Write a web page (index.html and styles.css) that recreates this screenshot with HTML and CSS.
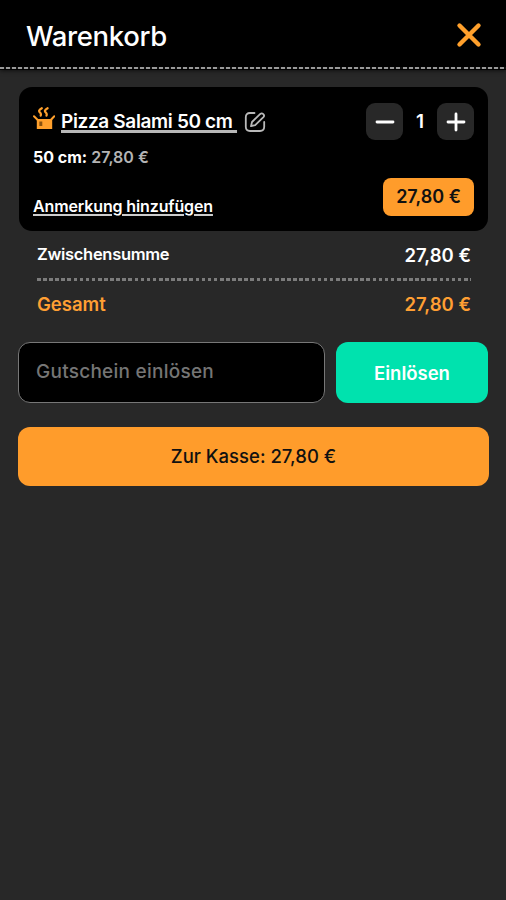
FILE: index.html
```html
<!DOCTYPE html>
<html lang="de">
<head>
<meta charset="utf-8">
<title>Warenkorb</title>
<link rel="stylesheet" href="styles.css">
</head>
<body>
<header class="header">
  <h1 class="title">Warenkorb</h1>
  <button class="close" aria-label="Schließen"><svg width="26" height="26" viewBox="0 0 26 26"><path d="M3.500 3.500 22.500 22.500M22.500 3.500 3.500 22.500" fill="none" stroke="#ffa02c" stroke-width="4.400" stroke-linecap="round"/></svg></button>
</header>
<main class="cart">
  <section class="item">
    <div class="item-head">
      <svg class="dish" width="22" height="23" viewBox="0 0 22 23">
        <path d="M3.800 12h15.400v10H3.800z" fill="#ffa02c"/>
        <path d="M1 9.300 5 13.300M21.300 9.300 17.500 13.300" fill="none" stroke="#ffa02c" stroke-width="2" stroke-linecap="round"/>
        <path d="M8.800 1.200C5.600 3 5.600 4.200 7 5.500 8 6.500 8.100 7.700 7.700 8.700M14.600 1.200C11.400 3 11.400 4.200 12.800 5.500 13.800 6.500 13.900 7.700 13.500 8.700" fill="none" stroke="#ffa02c" stroke-width="2.200" stroke-linecap="round"/>
        <path d="M6.300 14.500h3v4.500h-3z" fill="#8a520f"/>
      </svg>
      <a class="item-name">Pizza Salami 50 cm&nbsp;</a>
      <svg class="edit" width="22" height="22" viewBox="0 0 22 22" fill="none" stroke="#b9b9b9" stroke-width="1.800" stroke-linecap="round" stroke-linejoin="round">
        <path d="M10.500 2H6Q1.800 2 1.800 6.200v9.600Q1.800 20 6 20h10Q20.200 20 20.200 15.800V11"/>
        <path d="M7 15.200 8 11 16.300 2.900Q17.800 1.800 19.300 3.200T19.400 6.200L11.200 14.200Z"/>
      </svg>
      <div class="stepper">
        <button class="step" aria-label="Weniger"><svg width="20" height="20" viewBox="0 0 20 20"><path d="M2 10h16" stroke="#fff" stroke-width="2.800" stroke-linecap="round"/></svg></button>
        <span class="count">1</span>
        <button class="step" aria-label="Mehr"><svg width="20" height="20" viewBox="0 0 20 20"><path d="M2 10h16M10 2v16" stroke="#fff" stroke-width="2.800" stroke-linecap="round"/></svg></button>
      </div>
    </div>
    <p class="variant"><b>50 cm:</b> 27,80 €</p>
    <div class="item-foot">
      <a class="note">Anmerkung hinzufügen</a>
      <span class="price">27,80 €</span>
    </div>
  </section>
  <section class="totals">
    <div class="row subtotal"><span class="label">Zwischensumme</span><span>27,80 €</span></div>
    <div class="divider"></div>
    <div class="row total"><span>Gesamt</span><span>27,80 €</span></div>
  </section>
  <div class="voucher">
    <input class="code" type="text" placeholder="Gutschein einlösen">
    <button class="redeem">Einlösen</button>
  </div>
  <button class="checkout">Zur Kasse: 27,80 €</button>
</main>
</body>
</html>
```
FILE: styles.css
```css
* { box-sizing: border-box; }
body {
  margin: 0;
  min-height: 900px;
  background: #282828;
  color: #fff;
  font-family: Inter, "Liberation Sans", sans-serif;
}
button {
  border: 0;
  padding: 0;
  font: inherit;
}
.header {
  height: 70px;
  padding: 0 24px 0 26px;
  display: flex;
  align-items: center;
  justify-content: space-between;
  background:
    repeating-linear-gradient(90deg, #999 0 4px, #111 4px 6.100px) 0 67px / 100% 2px no-repeat,
    #000;
  box-shadow: 0 1px 4px rgba(0, 0, 0, .6);
}
.title {
  margin: 2px 0 0;
  font-size: 27.500px;
  line-height: 34px;
  font-weight: 500;
  letter-spacing: -.35px;
}
.close {
  background: none;
  width: 26px;
  height: 26px;
}
.cart { padding: 17px 17px 0 18px; }
.item {
  height: 144px;
  margin: 0 1px;
  padding: 16px 14px 0;
  border-radius: 13px;
  background: #000;
}
.item-head {
  display: flex;
  height: 37px;
  align-items: center;
}
.dish { margin: -7px 6px 0 0; }
.item-name {
  font-size: 19px;
  line-height: 24px;
  font-weight: 600;
  letter-spacing: -.35px;
  text-decoration: underline #b8b8b8 2.500px;
  text-underline-offset: 2px;
}
.edit { margin: 1px 0 0 7px; }
.stepper {
  margin-left: auto;
  display: flex;
  align-items: center;
}
.step {
  width: 37px;
  height: 37px;
  border-radius: 9px;
  background: #282828;
  display: grid;
  place-items: center;
}
.count {
  width: 34px;
  text-align: center;
  font-size: 19px;
  font-weight: 600;
}
.variant {
  margin: 7px 0 0;
  font-size: 16px;
  line-height: 20px;
  font-weight: 600;
  color: #b4b4b4;
}
.variant b { color: #fff; font-weight: 700; }
.item-foot {
  display: flex;
  justify-content: space-between;
  margin-top: 11px;
}
.note {
  margin-top: 18px;
  font-size: 16px;
  line-height: 20px;
  font-weight: 600;
  letter-spacing: -.13px;
  text-decoration: underline #ccc 1.500px;
  text-underline-offset: 2px;
}
.price {
  width: 91px;
  height: 38px;
  border-radius: 8px;
  background: #ff9c2b;
  color: #111;
  font-size: 18px;
  line-height: 38px;
  font-weight: 600;
  text-align: center;
}
.totals {
  margin: 0 18px 0 19px;
  padding-top: 12px;
  font-size: 18.500px;
  font-weight: 600;
}
.row {
  display: flex;
  justify-content: space-between;
  line-height: 24px;
}
.label { font-size: 16.500px; line-height: 22px; letter-spacing: -.3px; }
.divider {
  height: 3px;
  margin: 11px 0 11px;
  background: repeating-linear-gradient(90deg, #7c7c7c 0 3.600px, #282828 3.600px 6.100px);
}
.total { color: #ff9f33; }
.voucher {
  display: flex;
  gap: 11px;
  margin: 26px 1px 0 0;
}
.code {
  width: 307px;
  height: 61px;
  padding: 0 17px 2px;
  border: 1px solid #777;
  border-radius: 12px;
  background: #000;
  color: #fff;
  font: 500 19px Inter, "Liberation Sans", sans-serif;
  letter-spacing: .25px;
}
.code::placeholder { color: #757575; opacity: 1; }
.redeem {
  flex: 1;
  height: 61px;
  border-radius: 12px;
  background: #00e2ae;
  color: #fff;
  font-size: 18.500px;
  font-weight: 600;
}
.checkout {
  display: block;
  width: 100%;
  height: 59px;
  margin-top: 24px;
  padding-bottom: 1px;
  border-radius: 12px;
  background: #ff9c2b;
  color: #111;
  font-size: 18.500px;
  font-weight: 550;
}
```
